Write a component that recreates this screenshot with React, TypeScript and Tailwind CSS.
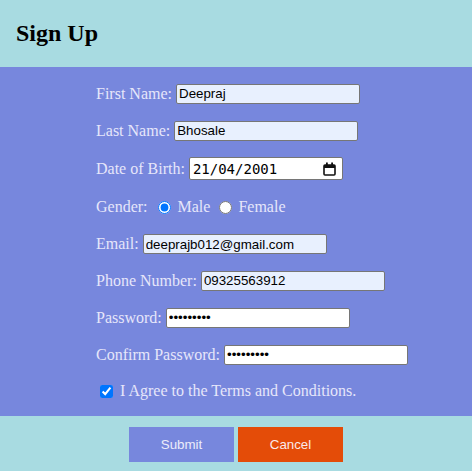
import React from "react";

const serif = "font-['Liberation_Serif','Times_New_Roman',serif]";
const sans = "font-['Liberation_Sans',Arial,sans-serif]";

function TextRow({ label, value, h, bg = "bg-[#e8f0fe]", type = "text" }: { label: string; value: string; h: string; bg?: string; type?: string }) {
  return (
    <div className={`flex items-center gap-[4px] ${h}`}>
      <span className="text-[16px] leading-[18px] text-[#e6e6fa]">{label}</span>
      <input
        type={type}
        value={value}
        readOnly
        className={`box-border h-[20px] w-[184px] rounded-[2px] border border-[#767676] px-[2px] py-[1px] text-[13.33px] text-black outline-none ${sans} ${bg}`}
      />
    </div>
  );
}

export default function App() {
  return (
    <div className={`min-h-screen bg-[#a8dbe1] ${serif}`}>
      <div className="bg-[#a8dbe1] px-[16px] py-[20px]">
        <h2 className="text-[24px] font-bold leading-[27px] text-black">Sign Up</h2>
      </div>
      <form className="flex flex-col bg-[#7787dd] pb-[7px] pl-[96px] pt-[8px]" onSubmit={(e) => e.preventDefault()}>
        <TextRow label="First Name:" value="Deepraj" h="h-[37px]" />
        <TextRow label="Last Name:" value="Bhosale" h="h-[37px]" />
        <div className="flex h-[39px] items-center gap-[4px]">
          <span className="text-[16px] leading-[18px] text-[#e6e6fa]">Date of Birth:</span>
          <div className="box-border flex h-[23px] w-[154px] items-center justify-between rounded-[2px] border border-[#767676] bg-white pl-[3px] pr-[6px]">
            <span className="font-['DejaVu_Sans_Mono',monospace] text-[14px] leading-[16px] text-black">21/04/2001</span>
            <svg width="13" height="14" viewBox="0 0 13 14" className="block">
              <rect x="1" y="3" width="11" height="10" rx="1" fill="none" stroke="#111" strokeWidth="1.6" />
              <rect x="1" y="3" width="11" height="3" fill="#111" />
              <rect x="3" y="0.5" width="1.8" height="3" fill="#111" />
              <rect x="8.2" y="0.5" width="1.8" height="3" fill="#111" />
            </svg>
          </div>
        </div>
        <div className="flex h-[38px] items-center text-[16px] leading-[18px] text-[#e6e6fa]">
          <span>Gender:</span>
          <input type="radio" name="g" checked readOnly className="ml-[10px] h-[13px] w-[13px]" />
          <span className="ml-[7px]">Male</span>
          <input type="radio" name="g" readOnly checked={false} className="ml-[9px] h-[13px] w-[13px]" />
          <span className="ml-[6px]">Female</span>
        </div>
        <TextRow label="Email:" value="deeprajb012@gmail.com" h="h-[36px]" />
        <TextRow label="Phone Number:" value="09325563912" h="h-[37px]" />
        <TextRow label="Password:" value="123456789" h="h-[37px]" bg="bg-white" type="password" />
        <TextRow label="Confirm Password:" value="123456789" h="h-[37px]" bg="bg-white" type="password" />
        <div className="flex h-[36px] items-center text-[16px] leading-[18px] text-[#e6e6fa]">
          <input type="checkbox" checked readOnly className="ml-[4px] h-[13px] w-[13px]" />
          <span className="ml-[7px]">I Agree to the Terms and Conditions.</span>
        </div>
      </form>
      <div className={`flex justify-center gap-[4px] bg-[#a8dbe1] pb-[9px] pt-[11px] ${sans}`}>
        <button type="button" className="h-[35px] w-[105px] bg-[#7787dd] text-[13.33px] text-[#ececfa]">
          Submit
        </button>
        <button type="button" className="h-[35px] w-[105px] bg-[#e44c08] text-[13.33px] text-[#fbeaea]">
          Cancel
        </button>
      </div>
    </div>
  );
}
